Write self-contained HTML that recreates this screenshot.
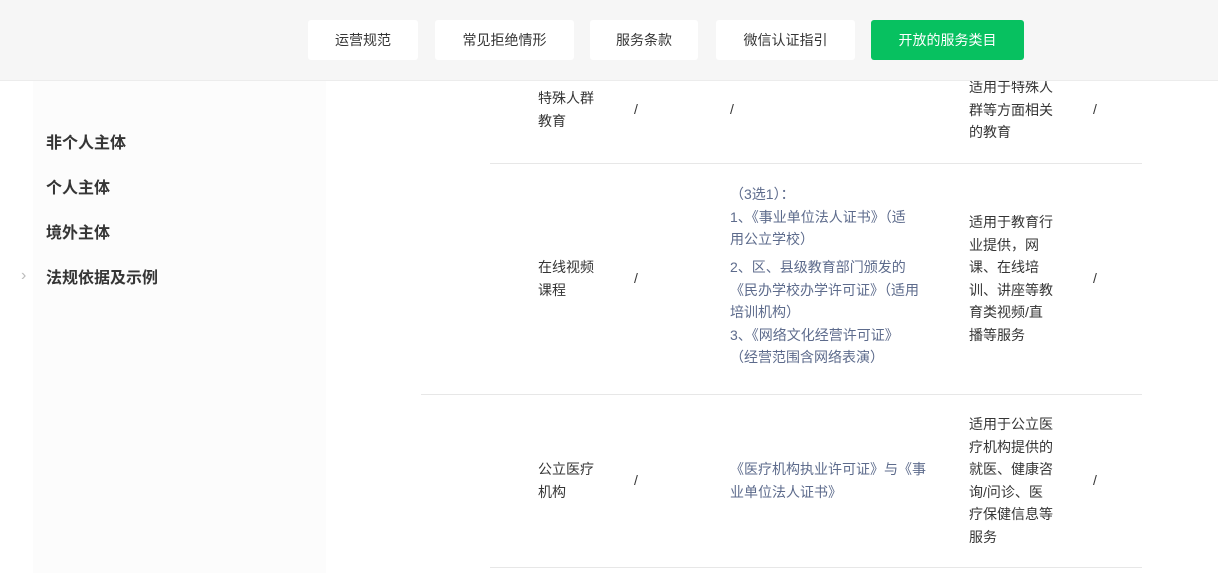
<!DOCTYPE html>
<html><head><meta charset="utf-8"><style>
body{margin:0;width:1218px;height:573px;overflow:hidden;background:#fff;font-family:"Liberation Sans","Noto Sans CJK SC",sans-serif;position:relative;color:#353535}
.a{position:absolute;font-size:14px;line-height:22.5px;white-space:nowrap}
.hd{position:absolute;left:0;top:0;width:1218px;height:80px;background:#f6f6f6;border-bottom:1px solid #ececec}
.b{position:absolute;top:20px;height:40px;line-height:40px;background:#fff;border-radius:3px;text-align:center;font-size:14px;color:#353535}
.g{background:#07c160;color:#fff}
.side{position:absolute;left:33px;top:81px;width:293px;height:492px;background:#fcfcfc}
.nav{position:absolute;left:46px;font-size:16px;font-weight:bold;color:#353535}
.ln{position:absolute;height:1px;background:#e7e7e7}
.bl{color:#5d6b8c}
</style></head><body>
<div class="side"></div>
<div class="nav" style="top:129px">非个人主体</div>
<div class="nav" style="top:174px">个人主体</div>
<div class="nav" style="top:219px">境外主体</div>
<div class="nav" style="top:264px">法规依据及示例</div>
<div class="a" style="left:21px;top:265px;color:#bbb;font-size:16px">›</div>

<div class="a" style="left:538px;top:87px">特殊人群<br>教育</div>
<div class="a" style="left:634px;top:98px">/</div>
<div class="a" style="left:730px;top:98px">/</div>
<div class="a" style="left:969px;top:76px">适用于特殊人<br>群等方面相关<br>的教育</div>
<div class="a" style="left:1093px;top:98px">/</div>
<div class="ln" style="left:490px;top:163px;width:652px"></div>

<div class="a" style="left:538px;top:256px">在线视频<br>课程</div>
<div class="a" style="left:634px;top:267px">/</div>
<div class="a bl" style="left:730px;top:183px">（3选1）：<br>1、《事业单位法人证书》（适<br>用公立学校）</div>
<div class="a bl" style="left:730px;top:256px">2、区、县级教育部门颁发的<br>《民办学校办学许可证》（适用<br>培训机构）<br>3、《网络文化经营许可证》<br>（经营范围含网络表演）</div>
<div class="a" style="left:969px;top:211px">适用于教育行<br>业提供，网<br>课、在线培<br>训、讲座等教<br>育类视频/直<br>播等服务</div>
<div class="a" style="left:1093px;top:267px">/</div>
<div class="ln" style="left:421px;top:394px;width:721px"></div>

<div class="a" style="left:538px;top:458px">公立医疗<br>机构</div>
<div class="a" style="left:634px;top:469px">/</div>
<div class="a bl" style="left:730px;top:458px">《医疗机构执业许可证》与《事<br>业单位法人证书》</div>
<div class="a" style="left:969px;top:413px">适用于公立医<br>疗机构提供的<br>就医、健康咨<br>询/问诊、医<br>疗保健信息等<br>服务</div>
<div class="a" style="left:1093px;top:469px">/</div>
<div class="ln" style="left:490px;top:567px;width:652px"></div>

<div class="hd"></div>
<div class="b" style="left:308px;width:110px">运营规范</div>
<div class="b" style="left:435px;width:139px">常见拒绝情形</div>
<div class="b" style="left:590px;width:108px">服务条款</div>
<div class="b" style="left:716px;width:139px">微信认证指引</div>
<div class="b g" style="left:871px;width:153px">开放的服务类目</div>
</body></html>
